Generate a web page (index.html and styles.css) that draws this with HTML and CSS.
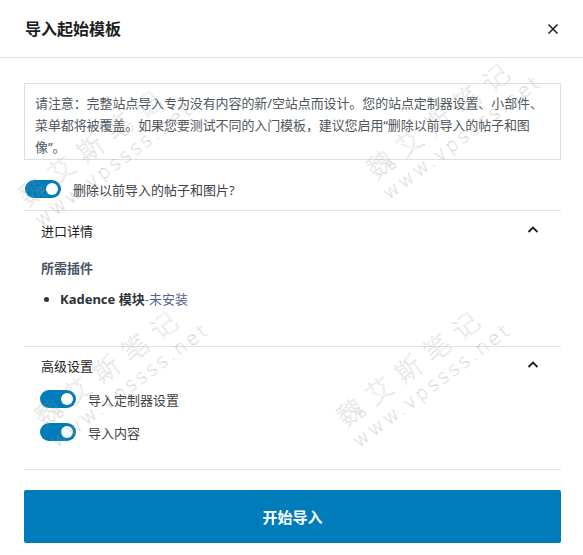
FILE: index.html
```html
<!DOCTYPE html>
<html lang="zh-CN">
<head>
<meta charset="utf-8">
<title>导入起始模板</title>
<link rel="stylesheet" href="styles.css">
</head>
<body>
<div class="modal">
  <header class="modal-header">
    <h1 class="modal-title">导入起始模板</h1>
    <button class="close-btn" aria-label="关闭">
      <svg width="12" height="12" viewBox="0 0 12 12"><path d="M1.5 1.5 L10.5 10.5 M10.5 1.5 L1.5 10.5" stroke="#1e1e1e" stroke-width="1.5" fill="none"/></svg>
    </button>
  </header>
  <div class="modal-body">
    <div class="notice">请注意：完整站点导入专为没有内容的新/空站点而设计。您的站点定制器设置、小部件、菜单都将被覆盖。如果您要测试不同的入门模板，建议您启用“删除以前导入的帖子和图像”。</div>
    <div class="toggle-row toggle-row-main">
      <span class="toggle"><span class="knob"></span></span>
      <span class="toggle-label">删除以前导入的帖子和图片?</span>
    </div>

    <section class="panel panel-details">
      <div class="panel-header">
        <span class="panel-title">进口详情</span>
        <svg class="chevron" width="24" height="24" viewBox="0 0 24 24"><path d="M7.5 14 L12 9.5 L16.5 14" stroke="#1e1e1e" stroke-width="1.8" fill="none"/></svg>
      </div>
      <div class="panel-content">
        <h2 class="plugins-title">所需插件</h2>
        <ul class="plugin-list">
          <li><strong>Kadence 模块</strong><span class="status">-未安装</span></li>
        </ul>
      </div>
    </section>

    <section class="panel panel-advanced">
      <div class="panel-header">
        <span class="panel-title">高级设置</span>
        <svg class="chevron" width="24" height="24" viewBox="0 0 24 24"><path d="M7.5 14 L12 9.5 L16.5 14" stroke="#1e1e1e" stroke-width="1.8" fill="none"/></svg>
      </div>
      <div class="panel-content adv-content">
        <div class="toggle-row">
          <span class="toggle"><span class="knob"></span></span>
          <span class="toggle-label">导入定制器设置</span>
        </div>
        <div class="toggle-row">
          <span class="toggle"><span class="knob"></span></span>
          <span class="toggle-label">导入内容</span>
        </div>
      </div>
    </section>

    <button class="start-btn">开始导入</button>
  </div>

  <div class="wm wm1"><div>魏艾斯笔记</div><div class="wm-url">www.vpssss.net</div></div>
  <div class="wm wm2"><div>魏艾斯笔记</div><div class="wm-url">www.vpssss.net</div></div>
  <div class="wm wm3"><div>魏艾斯笔记</div><div class="wm-url">www.vpssss.net</div></div>
  <div class="wm wm4"><div>魏艾斯笔记</div><div class="wm-url">www.vpssss.net</div></div>
</div>
</body>
</html>
```

FILE: styles.css
```css
html, body {
  margin: 0;
  padding: 0;
  background: #ffffff;
}
body {
  font-family: "Noto Sans", "Noto Sans CJK SC", sans-serif;
  font-size: 13px;
  color: #1e1e1e;
}
.modal {
  position: relative;
  width: 583px;
  height: 555px;
  overflow: hidden;
}
.modal-header {
  height: 57px;
  border-bottom: 1px solid #e0e0e0;
  display: flex;
  align-items: center;
  justify-content: space-between;
  padding: 0 25px 0 25px;
}
.modal-title {
  margin: 0;
  font-size: 16px;
  font-weight: 600;
  color: #1e1e1e;
  line-height: 20px;
}
.close-btn {
  background: none;
  border: 0;
  padding: 0;
  width: 24px;
  height: 24px;
  display: flex;
  align-items: center;
  justify-content: center;
  margin-right: -7px;
}
.modal-body {
  padding: 25px 22px 0 24px;
}
.notice {
  border: 1px solid #dcdfe5;
  padding: 8px 10px 1px 10px;
  line-height: 22px;
  min-height: 66px;
  color: #50575e;
  font-size: 13px;
  letter-spacing: -0.1px;
}
.toggle-row {
  display: flex;
  align-items: center;
  gap: 12px;
  height: 18px;
}
.toggle-row-main {
  margin-top: 20px;
  padding-left: 1px;
  padding-bottom: 12px;
  border-bottom: 1px solid #e2e2e2;
}
.toggle {
  width: 36px;
  height: 18px;
  border-radius: 9px;
  background: #007cba;
  position: relative;
  flex: none;
}
.knob {
  position: absolute;
  right: 3px;
  top: 3px;
  width: 12px;
  height: 12px;
  border-radius: 50%;
  background: #ffffff;
}
.toggle-label {
  color: #3c434a;
  font-size: 13px;
  line-height: 18px;
  margin-top: 1px;
}
.panel {
  border-bottom: 1px solid #e2e2e2;
  padding: 0 16px;
}
.panel-header {
  display: flex;
  align-items: center;
  justify-content: space-between;
  height: 38px;
}
.panel-advanced .panel-header {
  height: 36px;
}
.panel-title {
  font-size: 13px;
  color: #1e1e1e;
  padding-left: 1px;
}
.panel-content {
  padding: 9px 1px 37px 1px;
}
.plugins-title {
  margin: 0;
  font-size: 13px;
  line-height: 20px;
  font-weight: 700;
  color: #4a5568;
}
.plugin-list {
  margin: 11px 0 0 0;
  padding: 0 0 0 19px;
  line-height: 20px;
}
.plugin-list li {
  color: #2c3338;
}
.plugin-list strong {
  font-weight: 700;
  color: #2c3338;
}
.status {
  color: #52658c;
}
.adv-content {
  padding: 7px 0 28px 0;
  display: flex;
  flex-direction: column;
  gap: 15px;
}
.start-btn {
  display: block;
  width: 100%;
  margin-top: 20px;
  height: 53px;
  border: 0;
  border-radius: 2px;
  background: #007cba;
  color: #ffffff;
  font-family: "Noto Sans", "Noto Sans CJK SC", sans-serif;
  font-size: 15px;
  font-weight: 700;
}
.wm {
  position: absolute;
  transform-origin: 0 0;
  transform: rotate(-37deg);
  white-space: nowrap;
  pointer-events: none;
  font-family: "Noto Sans CJK SC", sans-serif;
  font-weight: 300;
  font-size: 26px;
  line-height: 28px;
  letter-spacing: 10px;
  color: rgba(255, 255, 255, 0);
  -webkit-text-stroke: 0.35px rgba(150, 150, 150, 0.55);
}
.wm-url {
  font-family: "DejaVu Sans", sans-serif;
  font-size: 19px;
  letter-spacing: 3px;
  margin-left: -2px;
}
.wm1 { left: 13px; top: 187px; }
.wm2 { left: 361px; top: 160px; }
.wm3 { left: 29px; top: 408px; }
.wm4 { left: 331px; top: 408px; }
```
